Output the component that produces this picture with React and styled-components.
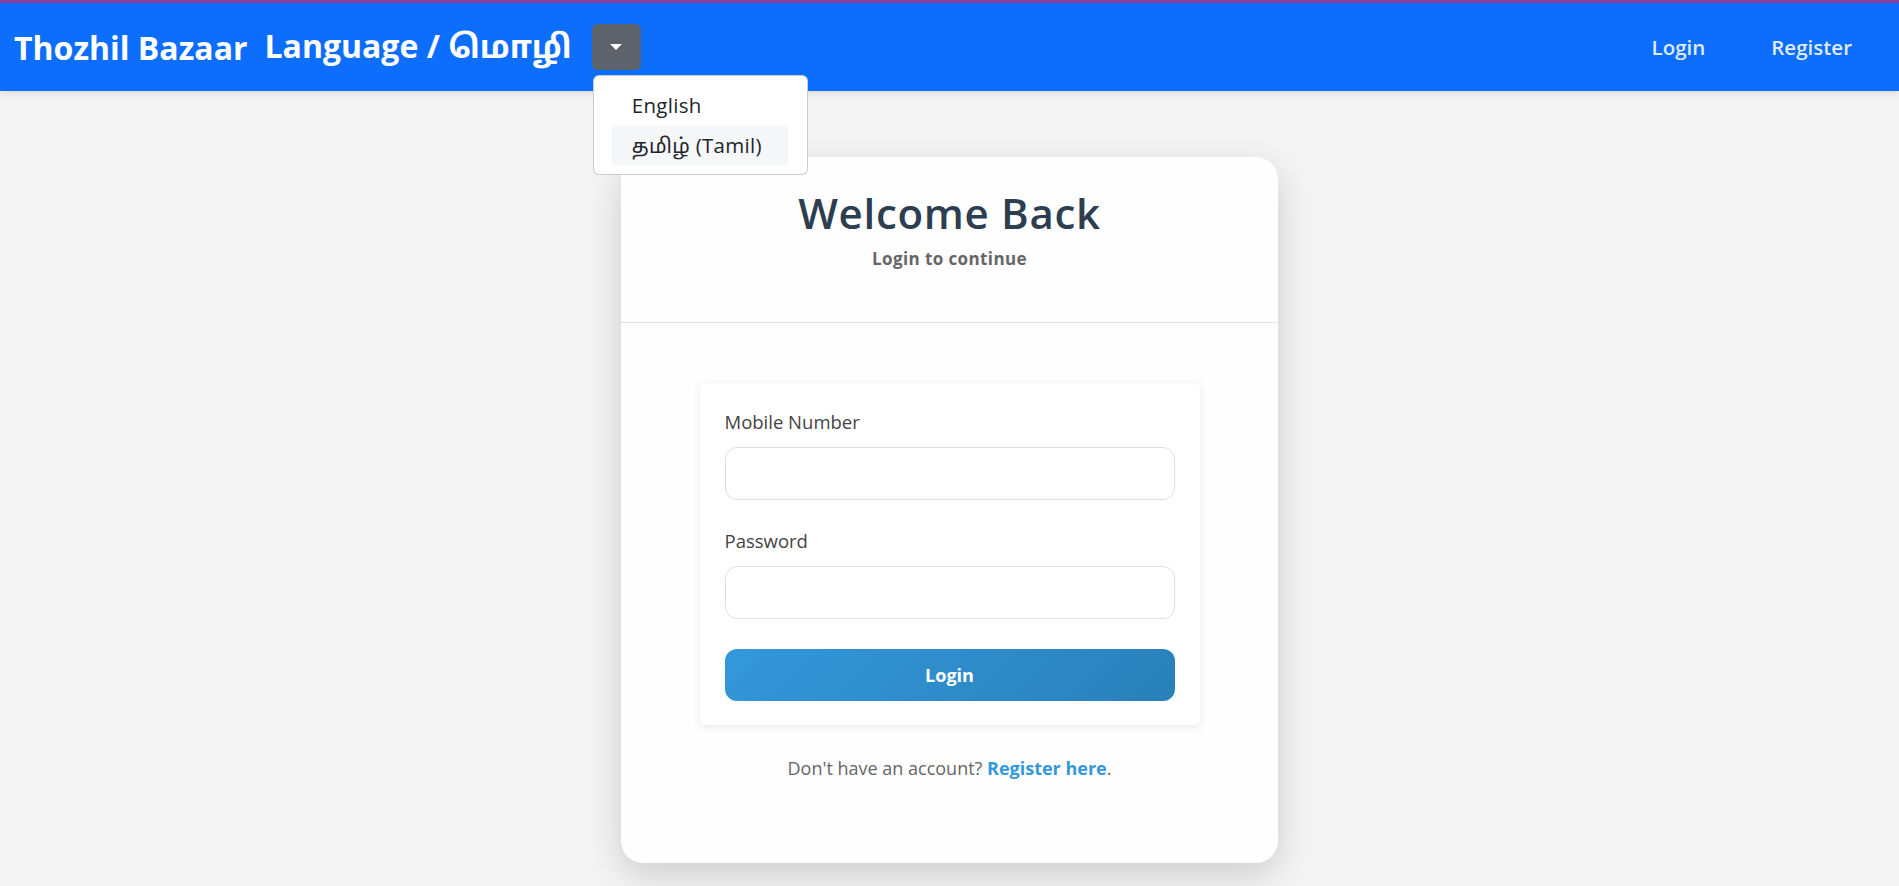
import React from 'react';
import styled, { createGlobalStyle } from 'styled-components';

const GlobalStyle = createGlobalStyle`
  html, body {
    margin: 0;
    padding: 0;
    background: #f4f4f4;
    font-family: "Open Sans", "Noto Sans", "Noto Sans Tamil", sans-serif;
    color: #212529;
  }
  * {
    box-sizing: border-box;
  }
`;

const Navbar = styled.nav`
  display: flex;
  align-items: center;
  height: 91px;
  padding: 0 47px 0 14px;
  background: #0d6efd;
  border-top: 3px solid #8a3d99;
  box-shadow: 0 2px 8px rgba(0, 0, 0, 0.12);
  position: relative;
  z-index: 2;
`;

const Brand = styled.span`
  font-size: 32px;
  font-weight: 700;
  color: #fff;
  white-space: nowrap;
`;

const LangTitle = styled(Brand)`
  margin-left: 17px;
`;

const LangDropdown = styled.div`
  position: relative;
  margin-left: 20px;
`;

const ToggleButton = styled.button`
  display: flex;
  align-items: center;
  justify-content: center;
  width: 49px;
  height: 46px;
  border: none;
  border-radius: 6px;
  background: #5c636a;
  cursor: pointer;

  &::after {
    content: '';
    border-top: 6px solid #fff;
    border-left: 6px solid transparent;
    border-right: 6px solid transparent;
  }
`;

const Menu = styled.ul`
  position: absolute;
  top: calc(100% + 5px);
  left: 1px;
  width: 215px;
  margin: 0;
  padding: 9px 19px 9px 18px;
  list-style: none;
  background: #fff;
  border: 1px solid rgba(0, 0, 0, 0.2);
  border-radius: 6px;
`;

const MenuItem = styled.li`
  padding: 5px 20px;
  font-size: 20.5px;
  line-height: 30px;
  color: #212529;
  white-space: nowrap;
  letter-spacing: 0.3px;
  background: ${(p) => (p.$active ? '#f6f7f9' : 'transparent')};
`;

const NavLinks = styled.div`
  display: flex;
  gap: 66px;
  margin-left: auto;
`;

const NavLink = styled.a`
  font-size: 20.5px;
  font-weight: 600;
  color: rgba(255, 255, 255, 0.88);
  text-decoration: none;
`;

const Main = styled.main`
  display: flex;
  justify-content: center;
  padding: 66px 0 40px;
`;

const Card = styled.div`
  width: 657px;
  background: #fefefe;
  border-radius: 22px;
  box-shadow: 0 12px 36px rgba(0, 0, 0, 0.16);
`;

const CardHeader = styled.div`
  padding: 32px 20px 51px;
  text-align: center;
  border-bottom: 1px solid #e2e2e2;
`;

const Title = styled.h1`
  margin: 0;
  font-size: 42px;
  line-height: 48px;
  font-weight: 600;
  letter-spacing: 0.7px;
  color: #2c3e50;
`;

const Subtitle = styled.p`
  margin: 10px 0 0;
  font-size: 17px;
  line-height: 24px;
  font-weight: 700;
  letter-spacing: 0.4px;
  color: #666;
`;

const CardBody = styled.div`
  display: flex;
  flex-direction: column;
  align-items: center;
  padding: 60px 0 81px;
`;

const FormBox = styled.form`
  width: 500px;
  padding: 25px 25px 24px;
  background: #fff;
  border-radius: 6px;
  box-shadow: 0 2px 10px rgba(0, 0, 0, 0.09);
`;

const Field = styled.div`
  margin-bottom: ${(p) => p.$gap || 27}px;
`;

const Label = styled.label`
  display: block;
  margin-bottom: 12px;
  font-size: 18.5px;
  line-height: 27px;
  color: #444;
`;

const Input = styled.input`
  display: block;
  width: 100%;
  height: 53px;
  padding: 0 16px;
  border: 1px solid #e0e0e0;
  border-radius: 12px;
  font: inherit;
  outline: none;
  background: #fff;
`;

const SubmitButton = styled.button`
  display: block;
  width: 100%;
  height: 52px;
  border: none;
  border-radius: 12px;
  background: linear-gradient(135deg, #3498db, #2980b9);
  color: #fff;
  font-family: inherit;
  font-size: 18px;
  font-weight: 700;
  cursor: pointer;
`;

const Footer = styled.p`
  margin: 30px 0 0;
  font-size: 18px;
  line-height: 27px;
  color: #666;

  a {
    color: #3498db;
    font-weight: 700;
    text-decoration: none;
  }
`;

export default function App() {
  return (
    <>
      <GlobalStyle />
      <Navbar>
        <Brand>Thozhil Bazaar</Brand>
        <LangTitle>Language / மொழி</LangTitle>
        <LangDropdown>
          <ToggleButton type="button" aria-label="Select language" />
          <Menu>
            <MenuItem>English</MenuItem>
            <MenuItem $active>தமிழ் (Tamil)</MenuItem>
          </Menu>
        </LangDropdown>
        <NavLinks>
          <NavLink href="#">Login</NavLink>
          <NavLink href="#">Register</NavLink>
        </NavLinks>
      </Navbar>
      <Main>
        <Card>
          <CardHeader>
            <Title>Welcome Back</Title>
            <Subtitle>Login to continue</Subtitle>
          </CardHeader>
          <CardBody>
            <FormBox onSubmit={(e) => e.preventDefault()}>
              <Field>
                <Label>Mobile Number</Label>
                <Input type="text" />
              </Field>
              <Field $gap={30}>
                <Label>Password</Label>
                <Input type="password" />
              </Field>
              <SubmitButton type="submit">Login</SubmitButton>
            </FormBox>
            <Footer>
              Don't have an account? <a href="#">Register here</a>.
            </Footer>
          </CardBody>
        </Card>
      </Main>
    </>
  );
}
